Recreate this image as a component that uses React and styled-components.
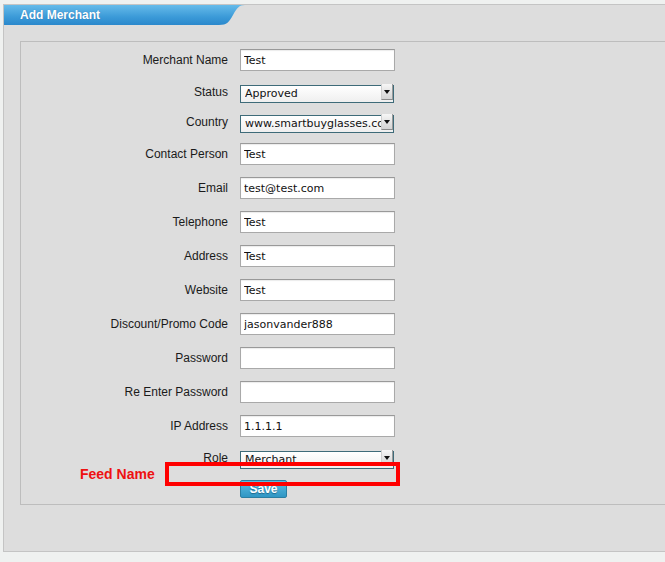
import React from "react";
import styled, { createGlobalStyle } from "styled-components";

const Global = createGlobalStyle`
  html, body { margin: 0; padding: 0; background: #eff1f0; }
  body { font-family: "Liberation Sans", Arial, sans-serif; overflow: hidden; }
  #root { width: 665px; height: 562px; overflow: hidden; }
`;

const Page = styled.div`
  padding-top: 4px;
  padding-left: 3px;
  position: relative;
  height: 562px;
  box-sizing: border-box;
`;

const Panel = styled.div`
  width: 720px;
  background: #dddddd;
  border: 1px solid #c4c4c4;
  padding-bottom: 46px;
`;

const TabRow = styled.div`
  display: flex;
  height: 20px;
`;

const TabLabel = styled.div`
  width: 211px;
  height: 20px;
  box-sizing: border-box;
  padding-left: 16px;
  background: linear-gradient(#66bbea, #3b9ad8 60%, #2a88cc);
  color: #fff;
  font-weight: bold;
  font-size: 12px;
  line-height: 20px;
  text-shadow: 0 0 1px rgba(0, 40, 90, 0.35);
`;

const Fieldset = styled.div`
  margin: 16px 0 0 16px;
  border: 1px solid #bdbdbd;
  padding: 7px 0 6px;
`;

const Form = styled.div`
  display: grid;
  grid-template-columns: 207px 155px;
  column-gap: 12px;
  row-gap: 12px;
  align-items: center;
`;

const Label = styled.label`
  text-align: right;
  font-size: 12px;
  color: #1a1a1a;
`;

const TextInput = styled.input`
  box-sizing: border-box;
  width: 155px;
  height: 22px;
  margin: 0;
  border: 1px solid #a9a9a9;
  border-top-color: #999;
  box-shadow: inset 0 1px 1px rgba(0, 0, 0, 0.08);
  background: #fff;
  padding: 0 3px;
  font-family: "DejaVu Sans", Verdana, sans-serif;
  font-size: 11px;
  color: #111;
  outline: none;
`;

const SelectWrap = styled.div`
  position: relative;
  width: 154px;
  height: 18px;
`;

const Select = styled.select`
  appearance: none;
  -webkit-appearance: none;
  box-sizing: border-box;
  width: 154px;
  height: 18px;
  margin: 0;
  border: 1px solid #3e6b79;
  border-radius: 0;
  background: linear-gradient(#ffffff, #efefef);
  padding: 0 10px 1px 4px;
  font-family: "DejaVu Sans", Verdana, sans-serif;
  font-size: 11px;
  color: #111;
  line-height: 15px;
  white-space: nowrap;
  overflow: hidden;
  outline: none;
`;

const Arrow = styled.span`
  position: absolute;
  right: 1px;
  top: 1px;
  width: 12px;
  height: 16px;
  box-sizing: border-box;
  background: linear-gradient(#f6f6f6, #d4d4d4);
  border-left: 1px solid #cfcfcf;
  border-right: 1px solid #9a9a9a;
  border-bottom: 1px solid #8a8a8a;
  display: flex;
  align-items: center;
  justify-content: center;
  pointer-events: none;
  &::after {
    content: "";
    border-left: 3.5px solid transparent;
    border-right: 3.5px solid transparent;
    border-top: 4px solid #111;
  }
`;

const SaveButton = styled.button`
  width: 47px;
  height: 18px;
  box-sizing: border-box;
  margin: 0;
  padding: 0;
  border: 1px solid #2a7ea2;
  border-radius: 2px;
  background: linear-gradient(#5cbde2, #2f96c4);
  color: #fff;
  font-family: "Liberation Sans", Arial, sans-serif;
  font-weight: bold;
  font-size: 12px;
  text-shadow: 0 1px 1px rgba(0, 50, 80, 0.5);
`;

const Annotation = styled.div`
  position: absolute;
  left: 165px;
  top: 462px;
  width: 235px;
  height: 24px;
  box-sizing: border-box;
  border: 4px solid #ff0000;
`;

const AnnotationText = styled.div`
  position: absolute;
  left: 80px;
  top: 465px;
  color: #ee1111;
  font-weight: bold;
  font-size: 14px;
  line-height: 18px;
`;

const fields = [
  { label: "Merchant Name", value: "Test" },
  { label: "Status", select: ["Approved"] },
  { label: "Country", select: ["www.smartbuyglasses.com"] },
  { label: "Contact Person", value: "Test" },
  { label: "Email", value: "test@test.com" },
  { label: "Telephone", value: "Test" },
  { label: "Address", value: "Test" },
  { label: "Website", value: "Test" },
  { label: "Discount/Promo Code", value: "jasonvander888" },
  { label: "Password", value: "", type: "password" },
  { label: "Re Enter Password", value: "", type: "password" },
  { label: "IP Address", value: "1.1.1.1" },
  { label: "Role", select: ["Merchant"] },
];

function TabCurve() {
  return (
    <svg width="32" height="20" viewBox="0 0 32 20" style={{ display: "block" }}>
      <defs>
        <linearGradient id="tabg" x1="0" y1="0" x2="0" y2="1">
          <stop offset="0" stopColor="#66bbea" />
          <stop offset="0.6" stopColor="#3b9ad8" />
          <stop offset="1" stopColor="#2a88cc" />
        </linearGradient>
      </defs>
      <path d="M0 0 H30 C24 0 22 3 18 10 C14 17 12 20 4 20 H0 Z" fill="url(#tabg)" />
    </svg>
  );
}

export default function App() {
  return (
    <>
      <Global />
      <Page>
        <Panel>
          <TabRow>
            <TabLabel>Add Merchant</TabLabel>
            <TabCurve />
          </TabRow>
          <Fieldset>
            <Form>
              {fields.map((f) => (
                <React.Fragment key={f.label}>
                  <Label>{f.label}</Label>
                  {f.select ? (
                    <SelectWrap>
                      <Select defaultValue={f.select[0]}>
                        {f.select.map((o) => (
                          <option key={o}>{o}</option>
                        ))}
                      </Select>
                      <Arrow />
                    </SelectWrap>
                  ) : (
                    <TextInput type={f.type || "text"} defaultValue={f.value} />
                  )}
                </React.Fragment>
              ))}
              <span />
              <div>
                <SaveButton>Save</SaveButton>
              </div>
            </Form>
          </Fieldset>
        </Panel>
        <AnnotationText>Feed Name</AnnotationText>
        <Annotation />
      </Page>
    </>
  );
}
